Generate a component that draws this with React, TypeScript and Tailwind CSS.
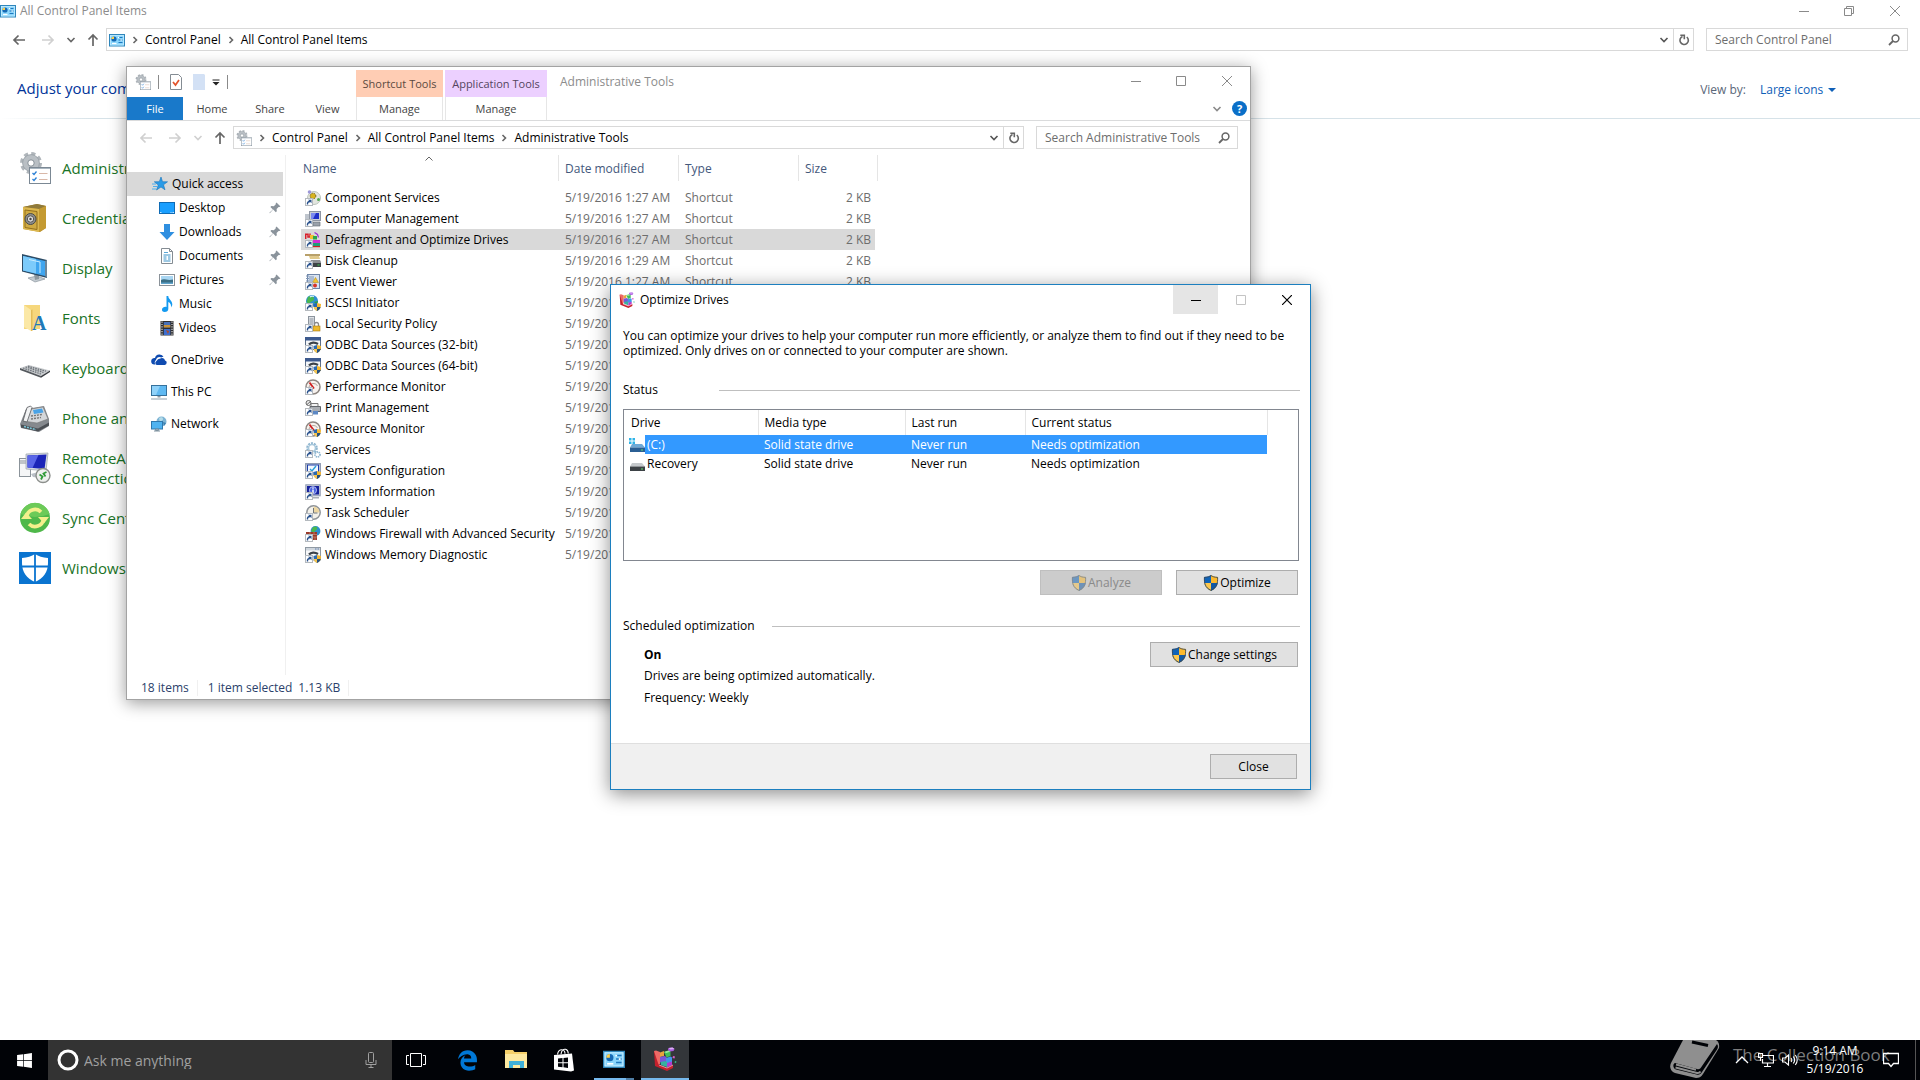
import type { ReactNode } from 'react'
import { FaEdgeLegacy, FaWindows } from 'react-icons/fa'

interface IconProps {
  size?: number
  className?: string
  box?: number
  children?: ReactNode
}

function Svg({ size = 16, className = '', box = 16, children }: IconProps) {
  return (
    <svg
      width={size}
      height={size}
      viewBox={`0 0 ${box} ${box}`}
      fill="none"
      className={`shrink-0 ${className}`}
      aria-hidden="true"
    >
      {children}
    </svg>
  )
}

/* ---------- small glyphs ---------- */

function ArrowGlyph({ dir, className = '' }: { dir: 'left' | 'right' | 'up'; className?: string }) {
  const paths = {
    left: 'M14 8H3M7.5 3.5L3 8l4.500 4.500',
    right: 'M2 8h11M8.500 3.500L13 8l-4.500 4.500',
    up: 'M8 14V3M3.500 7.500L8 3l4.500 4.500',
  }
  return (
    <Svg className={className}>
      <path d={paths[dir]} stroke="currentColor" strokeWidth="1.7" />
    </Svg>
  )
}

function Chevron({ dir, className = '' }: { dir: 'down' | 'right'; className?: string }) {
  return (
    <Svg size={10} box={10} className={className}>
      <path d={dir === 'down' ? 'M1.500 3L5 6.500 8.500 3' : 'M3.500 2L6.500 5 3.500 8'} stroke="currentColor" strokeWidth="1.6" />
    </Svg>
  )
}

function RefreshGlyph() {
  return (
    <Svg className="text-[#666]">
      <path d="M10.800 5a4.200 4.200 0 1 1-4.300-.600" stroke="currentColor" strokeWidth="1.600" />
      <path d="M4.300 3.300h4v4" stroke="currentColor" strokeWidth="1.600" />
    </Svg>
  )
}

function SearchGlyph() {
  return (
    <Svg className="text-[#666]">
      <circle cx="9.500" cy="6.500" r="3.400" stroke="currentColor" strokeWidth="1.500" />
      <path d="M7 9l-4 4" stroke="currentColor" strokeWidth="1.800" />
    </Svg>
  )
}

function PinGlyph() {
  return (
    <Svg size={12} box={12} className="text-[#8a939b]">
      <path d="M7.500.500l4 4-1.200.600-.700-.200-2 2 .200 2.300-1 1-2.600-2.600L.800 11.200l-.400-.400 3.500-3.400L1.400 5l1-1 2.400.200 2-2-.100-.700z" fill="currentColor" />
    </Svg>
  )
}

function Shield({ dim = false }: { dim?: boolean }) {
  return (
    <Svg className={dim ? 'opacity-50' : ''}>
      <path d="M8 0C6.500 1.200 4.000 1.900 1 2c-.200 6 .500 11 7 14z" fill="#0f63b8" />
      <path d="M8 0c1.500 1.200 4.000 1.900 7 2 .200 6-.500 11-7 14z" fill="#fdb92c" />
      <path d="M1.200 8H8v8C4 14 1.800 11.500 1.200 8z" fill="#fdc84e" />
      <path d="M14.800 8H8v8c4-2 6.200-4.500 6.800-8z" fill="#1259a5" />
      <path d="M8 .500C6.500 1.700 4.200 2.300 1.400 2.400c-.200 6 .600 10 6.600 13 6-3 6.800-7 6.600-13C11.800 2.300 9.500 1.700 8 .500z" stroke="#3a4a5a" strokeWidth=".900" />
    </Svg>
  )
}

/* ---------- object icons ---------- */

function ControlPanelIcon({ size = 16 }: { size?: number }) {
  return (
    <Svg size={size}>
      <rect x=".500" y="2.500" width="15" height="11.500" fill="#8ad6fc" stroke="#2f86bb" />
      <rect x="1.500" y="3.500" width="13" height="9.500" stroke="#c9edff" strokeWidth=".700" />
      <circle cx="5" cy="7" r="2.600" fill="#1769b4" />
      <path d="M5 7V4.400A2.600 2.600 0 0 0 2.400 7z" fill="#fdd04e" />
      <path d="M9.500 5.500h4M9.500 8h4M9.500 10.500h4" stroke="#1f78bf" strokeWidth="1.100" />
      <path d="M3 11.500h4.500" stroke="#fff" strokeWidth="1.200" />
      <rect x="9" y="4.900" width="1.300" height="1.300" fill="#fff" />
      <rect x="11.500" y="7.400" width="1.300" height="1.300" fill="#fff" />
    </Svg>
  )
}

function AdminToolsIcon({ size = 16 }: { size?: number }) {
  return (
    <Svg size={size} box={32}>
      <circle cx="12" cy="11" r="9.300" stroke="#b0b6bb" strokeWidth="3.400" strokeDasharray="4.100 3.200" />
      <circle cx="12" cy="11" r="5.800" stroke="#b9bfc4" strokeWidth="5.500" />
      <circle cx="12" cy="11" r="8.400" stroke="#8f989f" strokeWidth=".700" />
      <circle cx="12" cy="11" r="3.200" stroke="#8b949b" strokeWidth="1" />
      <rect x="10.500" y="15.500" width="21" height="16" fill="#fff" stroke="#7b8894" />
      <path d="M11 16.500h20" stroke="#a9b5bf" />
      <path d="M13.500 21l1.500 1.500 2.500-3M13.500 27l1.500 1.500 2.500-3" stroke="#2a7fd4" strokeWidth="1.300" />
      <path d="M20 21.500h8.500M20 27.500h8.500" stroke="#d9b8a8" />
    </Svg>
  )
}

function CredentialIcon() {
  return (
    <Svg size={32} box={32}>
      <path d="M4 5l14-3 9 2v22l-6 4-17-3z" fill="#b88d26" />
      <path d="M4 5l14-3 9 2-7 3z" fill="#8f7a3c" />
      <path d="M4 5l16 2v23L4 27z" fill="#dcb850" />
      <path d="M20 7l7-3v22l-7 4z" fill="#c49a32" />
      <path d="M6 8l12 1.500V27.500L6 25.500z" stroke="#94701c" fill="#cfaa42" />
      <circle cx="11.500" cy="17" r="5.500" fill="#8e8e8c" stroke="#4b4b46" />
      <circle cx="11.500" cy="17" r="3.200" fill="#ddd" stroke="#555" />
      <circle cx="11.500" cy="17" r="1.200" fill="#444" />
    </Svg>
  )
}

function DisplayIcon() {
  return (
    <Svg size={32} box={32}>
      <path d="M9 26l9-2 8 3-10 3z" fill="#c3cbd1" stroke="#8c979f" strokeWidth=".700" />
      <path d="M15 22l5 1v4l-4 1z" fill="#8d989f" />
      <path d="M3 2l25 6v18L3 19.500z" fill="#2d4c66" />
      <path d="M4 4l22 5v15L4 18.500z" fill="#3fa5ef" />
      <path d="M4 4l13 3v14.500L4 18.500z" fill="#7ccbfb" />
      <path d="M10 7.500l11 2.500v11" stroke="#c9ecff" />
      <path d="M26 9l2-1v18l-2-2z" fill="#6d8699" />
    </Svg>
  )
}

function FontsIcon() {
  return (
    <Svg size={32} box={32}>
      <path d="M5 3h16v24H5z" fill="#f6d77c" />
      <path d="M5 3l7 5v21l-7-4z" fill="#fbe8a6" />
      <path d="M12 8l1.500-.500V29L12 29z" fill="#e4bd58" />
      <text x="13" y="28" fontSize="20" fontWeight="700" fill="#1f7ab8" fontFamily="Liberation Serif, serif">A</text>
    </Svg>
  )
}

function KeyboardIcon() {
  return (
    <Svg size={32} box={32}>
      <path d="M1 16l9-3 21 5.500-9 5.500z" fill="#c9cccf" />
      <path d="M1 16l21 8v1.800L1 18z" fill="#55595e" />
      <path d="M22 24l9-5.500v1.500l-9 5.800z" fill="#383b40" />
      <path d="M4 16l18 6M6.500 15l18 5.500M9 14.200l18 5" stroke="#6f757b" strokeWidth="1.300" strokeDasharray="1.600 .900" />
    </Svg>
  )
}

function PhoneIcon() {
  return (
    <Svg size={32} box={32}>
      <path d="M1 22l6-15 18-3 5 13v7l-10 6L2 26z" fill="#85898e" />
      <path d="M7 8l17-3 5 12-11 4L4 19z" fill="#d4d7da" stroke="#777" strokeWidth=".600" />
      <path d="M14 8l9-1.500 1.500 4-9.500 1.500z" fill="#4aa3e6" />
      <path d="M4 19L8 5.500 11.500 4l1.500 1.500L8 20z" fill="#f2f3f4" stroke="#55585c" strokeWidth=".800" />
      <path d="M12 14l11-1.500M12 17l10-1.500" stroke="#777" strokeWidth="1.400" strokeDasharray="2 1" />
      <path d="M2 22.500l17 4 11-6v3l-11 6-17-4z" fill="#4b4f54" />
      <path d="M5 24.500l12 3" stroke="#7cc6d8" strokeWidth="1.500" strokeDasharray="2 1" />
    </Svg>
  )
}

function RemoteIcon() {
  return (
    <Svg size={32} box={32}>
      <rect x=".500" y="6.500" width="11" height="18" fill="#f5f6f7" stroke="#8b939a" />
      <path d="M1 9h10M1 11h10" stroke="#8b939a" />
      <path d="M7 2l22-1-2 18-20-2z" fill="#d6dae0" stroke="#9aa2ac" strokeWidth=".700" />
      <path d="M8.500 3.500l19-1-2 14.500-17-1.500z" fill="#1b24b8" />
      <path d="M8.500 3.500l11-.500-6 13-5-.500z" fill="#5a66e8" />
      <path d="M12 22l7-2 3 6-8-1z" fill="#b9bfc6" />
      <circle cx="24" cy="23.500" r="7" fill="#eef0ee" stroke="#8c8f8c" strokeWidth="1.400" />
      <path d="M20.500 22.500l3 2-1.500 3M27.500 20l-3 1.500 2 3" stroke="#2f9a37" strokeWidth="1.800" />
    </Svg>
  )
}

function SyncIcon() {
  return (
    <Svg size={32} box={32}>
      <circle cx="16" cy="16" r="15" fill="#4fb84a" />
      <path d="M1.500 12A15 15 0 0 1 30.500 12Q16 18 1.500 12z" fill="#6cca58" />
      <path d="M7.500 15a8.500 8.500 0 0 1 14.500-5M24.500 17a8.500 8.500 0 0 1-14.500 5" stroke="#f4f08c" strokeWidth="3.600" />
      <path d="M19 15h11l-5 6.500zM13 17H2l5-6.500z" fill="#f4f08c" />
    </Svg>
  )
}

function DefenderIcon() {
  return (
    <Svg size={32} box={32}>
      <path d="M0 0h32v32H0z" fill="#0a74d0" />
      <path d="M16 2c-3.500 2.500-7.500 3.500-13 4v5c0 9 4.500 15.500 13 19 8.500-3.500 13-10 13-19V6c-5.500-.500-9.500-1.500-13-4z" fill="#fff" />
      <path d="M16 2v28M2 14.500h28" stroke="#0a74d0" strokeWidth="1.800" />
    </Svg>
  )
}

function DefragIcon({ size = 16 }: { size?: number }) {
  return (
    <Svg size={size} box={24}>
      <path d="M1 4l5 1.500V18l8 3 6-3v3l-6 3-12-5z" fill="#c4202c" />
      <path d="M1 4l2-.500 4 1.500v12l-1.500.500z" fill="#ee6a66" />
      <path d="M7 5.500l4-1.500v5l-4 1z" fill="#e8a33c" />
      <path d="M11 5l4.500-1.500 2 1V9l-4 1.500z" fill="#3fbf58" />
      <path d="M11 5l4.500-1.500 2 1-4 1.500z" fill="#9be8a0" />
      <path d="M7 10l4.500-1 2 1v4.500L9 16l-2-1z" fill="#7a56d8" />
      <path d="M13 11l4.500-1.500 1.500 1V15l-4 1.500-2-1z" fill="#3f94ea" />
      <path d="M7.500 15l4.500-1 2 1v5l-6-2z" fill="#37b0a0" />
      <path d="M14 16l5-1.500V18l-5 2.500z" fill="#b23ad0" />
      <path d="M6 18l8 3 6-3" stroke="#f3a3b0" strokeWidth=".900" />
      <path d="M15.500 1l4-.500 2 1.500-1 2-4 .500-1.500-1.500z" fill="#a95be0" />
      <path d="M15.500 1l4-.500 2 1.500-4 .500z" fill="#dcaef5" />
      <path d="M20 9l2 .500-.500 2-2-.500z" fill="#d860c8" />
      <path d="M22 14l1.500.500-.500 1.500-1.500-.500z" fill="#35c08c" />
    </Svg>
  )
}

/* ---------- shortcut icons of the file list ---------- */

type ToolKind =
  | 'component' | 'computer' | 'defrag' | 'cleanup' | 'event' | 'iscsi' | 'policy' | 'odbc' | 'gauge'
  | 'print' | 'services' | 'config' | 'info' | 'clock' | 'firewall' | 'memory'

const toolArt: Record<ToolKind, ReactNode> = {
  component: (
    <>
      <circle cx="9" cy="8" r="6.500" fill="#e3e6df" stroke="#bcc4bd" />
      <circle cx="8" cy="6" r="2.800" fill="#d8b41e" stroke="#6a5a16" strokeDasharray="1.200 .800" />
      <circle cx="4.500" cy="2" r="1.800" fill="#9c97d8" />
      <circle cx="13.500" cy="9.500" r="1.500" fill="#52a852" />
    </>
  ),
  computer: (
    <>
      <rect x="4.500" y=".500" width="11" height="9" fill="#c9ced6" stroke="#8e96a3" />
      <rect x="6" y="2" width="8" height="6" fill="#1f2fc8" />
      <path d="M6 2h5l-3 6H6z" fill="#7b8af0" />
      <path d="M8 11h7v4H8z" fill="#9aa1aa" stroke="#6c727b" strokeWidth=".700" />
      <path d="M0 3h4v5H0z" fill="#bfc5cd" />
    </>
  ),
  defrag: (
    <>
      <path d="M.700 7V2.200H3V5h2V1.500" stroke="#d81f2a" strokeWidth="1.500" />
      <path d="M5 3h4v4H5z" fill="#f1c232" />
      <path d="M8 4h4v3.500H8z" fill="#2aa84a" />
      <path d="M8 8h7v3H8z" fill="#d12fd4" />
      <path d="M7 11h8v3H7z" fill="#1f9e78" />
      <path d="M9.500.500l3 2 1 3" stroke="#9b30d0" strokeWidth="1.200" />
      <path d="M6 14h9v1.200H6z" fill="#c22" />
    </>
  ),
  cleanup: (
    <>
      <path d="M0 1h15v2H0z" fill="#b8a06a" />
      <path d="M4 3h10l1 3H5z" fill="#e0c98c" />
      <path d="M5 9l1-2h9l1 2v5H5z" fill="#8c9094" />
      <path d="M5 10h11v4H5z" fill="#3e4347" />
      <path d="M12.500 12h2" stroke="#39d353" />
    </>
  ),
  event: (
    <>
      <rect x="2.500" y=".500" width="12" height="14" fill="#d9e4f2" stroke="#6f86a8" />
      <path d="M4 3h5M4 5h5M4 7h4M1 2h3M1 4.500h3M1 7h3" stroke="#7f95b5" />
      <path d="M10.500 3.500l3 5h-6z" fill="#f4c430" stroke="#a88414" strokeWidth=".500" />
      <circle cx="10" cy="11.500" r="2" fill="#d8352a" />
    </>
  ),
  iscsi: (
    <>
      <circle cx="7" cy="6" r="6" fill="#2d8fd0" />
      <path d="M3 2c3-2 6-1 6 2S5 6 4 9L1.500 7z" fill="#49b84f" />
      <path d="M9 7l4-1-1 4z" fill="#2d9b45" />
      <path d="M5 2a4 4 0 0 1 4-.500" stroke="#d6f0ff" strokeWidth="1.200" />
    </>
  ),
  policy: (
    <>
      <rect x="3.500" y=".500" width="6" height="10" fill="#dfe3e8" stroke="#8c949d" />
      <path d="M4.500 3h4M4.500 5h4M4.500 7h4" stroke="#8c949d" />
      <path d="M9.500 10V8.500a2 2 0 0 1 4 0V10" stroke="#8a8a8a" strokeWidth="1.300" />
      <rect x="8" y="10" width="7" height="5" fill="#edb82c" stroke="#a87a10" strokeWidth=".600" />
    </>
  ),
  odbc: (
    <>
      <rect x=".500" y=".500" width="15" height="12" fill="#f4f6f8" stroke="#5d6f88" />
      <path d="M0 0h16v3.500H0z" fill="#3d5a8e" />
      <path d="M4 7.500c2-2.500 6-2.500 9-.500" stroke="#3b4148" strokeWidth="2.200" />
    </>
  ),
  gauge: (
    <>
      <circle cx="8" cy="8" r="7" fill="#f7f2ee" stroke="#8d8580" strokeWidth="1.500" />
      <path d="M4 8a4.500 4.500 0 0 1 8.500-1" stroke="#b5a89e" />
      <path d="M4.500 3.500l4.500 6" stroke="#d01e1e" strokeWidth="1.800" />
    </>
  ),
  print: (
    <>
      <circle cx="3.500" cy="3" r="2.500" fill="#eee" stroke="#666" />
      <path d="M2 4.500L6 1" stroke="#666" />
      <path d="M6 3.500h7V7H6z" fill="#f3f3f3" stroke="#777" />
      <path d="M5 6.500h10.500v5H5z" fill="#a9adb2" stroke="#62666b" />
      <path d="M8 11h5v3.500H8z" fill="#5c88c4" />
    </>
  ),
  services: (
    <>
      <circle cx="7" cy="6" r="4.800" stroke="#8fb5cf" strokeWidth="2" strokeDasharray="2 1" />
      <circle cx="7" cy="6" r="3.500" stroke="#a8c8dc" strokeWidth="1.600" />
      <circle cx="12.500" cy="12.500" r="2.500" stroke="#8fb5cf" strokeWidth="1.800" strokeDasharray="1.400 .700" />
    </>
  ),
  config: (
    <>
      <rect x=".800" y=".800" width="14.400" height="11" fill="#fff" stroke="#8d98b0" strokeWidth="1.500" />
      <rect x="2.500" y="2" width="11" height="8" fill="#f4f8ff" stroke="#1d3faa" />
      <path d="M5 6l2 2 4-5" stroke="#29a0d8" strokeWidth="1.400" />
    </>
  ),
  info: (
    <>
      <rect x=".800" y=".800" width="14.400" height="11" fill="#c6ccd8" stroke="#8d98b0" />
      <rect x="2" y="2" width="12" height="8.500" fill="#15209c" />
      <circle cx="8" cy="6.200" r="3.600" fill="#4a63e0" stroke="#dbe2ff" strokeWidth=".700" />
      <path d="M8 5.500V9M8 3.500v1.200" stroke="#fff" strokeWidth="1.400" />
      <path d="M8 13h6v1.500H7z" fill="#a9afb8" />
    </>
  ),
  clock: (
    <>
      <circle cx="8.500" cy="7.500" r="6.700" fill="#f3f1ea" stroke="#8f9499" strokeWidth="1.500" />
      <path d="M8.500 7.500V1.500a6 6 0 0 1 6 6z" fill="#ecd6a2" />
      <path d="M8.500 3v5h4" stroke="#6e7478" />
    </>
  ),
  firewall: (
    <>
      <circle cx="10.500" cy="5" r="4.900" fill="#2d8fd0" />
      <path d="M8 1c3-1.500 5 0 4 2s-3 2-3 4L6 5z" fill="#49b84f" />
      <path d="M1 6h11v8H1z" fill="#9a3a2a" />
      <path d="M1 8.500h11M1 11h11M5 6v2.500M9 6v2.500M7 8.500V11M10 11v3" stroke="#d09a88" strokeWidth=".600" />
    </>
  ),
  memory: (
    <>
      <rect x=".500" y=".500" width="15" height="12.500" fill="#f7f8f9" stroke="#8f99a3" />
      <path d="M1 1h14v2.500H1z" fill="#cfd6dd" />
      <path d="M10 2h4" stroke="#5f7fae" strokeDasharray="1 .500" />
      <path d="M4 7.500c2-2.500 6-2.500 9-.500" stroke="#3b4148" strokeWidth="2.200" />
    </>
  ),
}

function ToolIcon({ kind, shield }: { kind: ToolKind; shield?: boolean }) {
  return (
    <Svg>
      {toolArt[kind]}
      {shield && (
        <>
          <path d="M12 8l4 1c0 3.500-1 5.500-4 7z" fill="#f5b72e" />
          <path d="M12 8L8.500 9c0 3.500.700 5.500 3.500 7z" fill="#2a68b0" />
          <path d="M8.600 12H12v4c-2-1-3.200-2-3.400-4z" fill="#f5c552" />
          <path d="M15.600 12H12v4c2-1 3.200-2 3.600-4z" fill="#24507f" />
        </>
      )}
      <rect x=".500" y="8.500" width="7" height="7" fill="#fff" stroke="#b4b9be" />
      <path d="M2.500 14.500c-.300-2 .500-3 2.500-3" stroke="#27508c" strokeWidth="1.400" />
      <path d="M3 9.700h3.500v3.500z" fill="#27508c" />
    </Svg>
  )
}

/* ---------- navigation pane icons ---------- */

function StarIcon() {
  return (
    <Svg>
      <path d="M9 1l1.500 4.700 5 .100-4 3 1.500 5L9 11l-4.500 3 1.800-5-4-3.200 5-.100z" fill="#2b9be6" stroke="#1474bd" strokeWidth=".600" />
      <path d="M0 8h4M1 10.500h4M0 13h4" stroke="#4fb0ee" />
    </Svg>
  )
}

function DesktopIcon() {
  return (
    <Svg>
      <rect x=".500" y="2.500" width="15" height="11" fill="#1a9fff" stroke="#0f6bb5" />
      <path d="M1 12.500h14" stroke="#bfe3ff" strokeDasharray="1.500 9 1 1" />
    </Svg>
  )
}

function DownloadIcon() {
  return (
    <Svg>
      <path d="M5 0h6v8h4.500L8 16 .500 8H5z" fill="#2f8fe0" />
    </Svg>
  )
}

function DocumentIcon() {
  return (
    <Svg>
      <path d="M2.500.500h8l3 3v12h-11z" fill="#fff" stroke="#848c93" />
      <path d="M10.500.500v3h3" stroke="#848c93" />
      <path d="M4.500 7h7M4.500 9h3M4.500 11h3M4.500 13h7M9 9h2.500M9 11h2.500" stroke="#3d93c8" />
      <path d="M5 4.500h4" stroke="#5aa7d6" />
    </Svg>
  )
}

function PicturesIcon() {
  return (
    <Svg>
      <rect x=".500" y="2.500" width="15" height="11" fill="#fff" stroke="#8b9299" />
      <path d="M2 4h12v8H2z" fill="#a9d6f2" />
      <path d="M2 8c3-2 6 1 12-.500V12H2z" fill="#3b6f86" />
      <path d="M2 10.500h12V12H2z" fill="#5fa3cb" />
    </Svg>
  )
}

function MusicIcon() {
  return (
    <Svg>
      <path d="M7.500 0h1.800c0 3.500 4.200 4 4 9l-1.300 2.500C12.500 8 10.500 6.500 9.300 6v7c0 1.800-1.600 3-3.600 3S2.800 14.800 3 13.500C3.200 11.500 5.500 10.500 7.500 11z" fill="#149af0" />
    </Svg>
  )
}

function VideosIcon() {
  return (
    <Svg>
      <path d="M1.500 1h13v14.500h-13z" fill="#2e2e30" />
      <path d="M3 1.500V15M13 1.500V15" stroke="#d8d8d8" strokeWidth="1.200" strokeDasharray="1.200 1.200" />
      <path d="M4.800 2h6.500v5.500H4.800z" fill="#4770b8" />
      <path d="M4.800 5h6.500v2.500H4.800z" fill="#c99136" />
      <path d="M4.800 9h6.500v6H4.800z" fill="#3d6fd0" />
      <path d="M7 10l3 1-1 3z" fill="#b24a26" />
    </Svg>
  )
}

function OneDriveIcon() {
  return (
    <Svg>
      <path d="M6.500 13h7.200a2.300 2.300 0 0 0 .300-4.500 3.200 3.200 0 0 0-4.700-2A4.300 4.300 0 0 0 5.500 9 2.100 2.100 0 0 0 6.500 13z" fill="#0f4bb0" />
      <path d="M4.500 12.500A3 3 0 0 1 5 8c.500-2.500 3-4 5.500-2.500.500-.300 1.500-.500 2.200-.300A4.600 4.600 0 0 0 4 6 3.300 3.300 0 0 0 .200 9.500c0 1.800 1.300 3 3 3z" fill="#0f4bb0" />
    </Svg>
  )
}

function PcIcon() {
  return (
    <Svg>
      <rect x=".500" y="1.500" width="15" height="10" fill="#5fb9f2" stroke="#35719c" />
      <path d="M1 2h8l-4 9H1z" fill="#8fd2fa" />
      <path d="M6.500 12h3v1.500h-3z" fill="#8d99a3" />
      <path d="M0 15h16" stroke="#8fa0ad" />
    </Svg>
  )
}

function NetworkIcon() {
  return (
    <Svg>
      <circle cx="10.500" cy="5.500" r="5" fill="#7db4d4" />
      <path d="M8 2c2-1.500 4-1 4 1s-3 2-3 4z" fill="#b4dbe8" />
      <path d="M12 6l3 1-2 3z" fill="#3c7fae" />
      <rect x=".500" y="5.500" width="11" height="7.500" fill="#4fb3f0" stroke="#2f78ad" />
      <path d="M4.500 13h3v1.500h-3zM3 15h6" stroke="#7f929f" />
    </Svg>
  )
}

/* ---------- shared controls ---------- */

function WindowButtons({ restore = false, tone }: { restore?: boolean; tone: string }) {
  return (
    <div className={`flex ${tone}`}>
      <button aria-label="Minimize" className="flex h-7 w-[45px] items-center justify-center">
        <Svg size={10} box={10}><path d="M0 5.500h10" stroke="currentColor" /></Svg>
      </button>
      <button aria-label="Maximize" className="flex h-7 w-[45px] items-center justify-center">
        <Svg size={10} box={10}>
          {restore ? (
            <path d="M.500 2.500h7v7h-7zM2.500 2.500v-2h7v7h-2" stroke="currentColor" />
          ) : (
            <path d="M.500.500h9v9h-9z" stroke="currentColor" />
          )}
        </Svg>
      </button>
      <button aria-label="Close" className="flex h-7 w-[47px] items-center justify-center">
        <Svg size={10} box={10}><path d="M0 0l10 10M10 0L0 10" stroke="currentColor" /></Svg>
      </button>
    </div>
  )
}

function AddressBar({ icon, crumbs }: { icon: ReactNode; crumbs: string[] }) {
  return (
    <div className="flex h-[23px] min-w-0 flex-1 items-center border border-[#d9d9d9] pl-[2px]">
      {icon}
      <nav aria-label="Path" className="flex flex-1 items-center">
        {crumbs.map((crumb) => (
          <span key={crumb} className="flex items-center">
            <Chevron dir="right" className="mx-[5px] text-[#666]" />
            <a href="#" className="text-black">{crumb}</a>
          </span>
        ))}
      </nav>
      <button aria-label="Previous locations" className="flex h-full w-[18px] items-center justify-center text-[#555]">
        <Chevron dir="down" />
      </button>
      <button aria-label="Refresh" className="flex h-full w-5 items-center justify-center border-l border-[#d9d9d9]">
        <RefreshGlyph />
      </button>
    </div>
  )
}

function SearchBox({ label }: { label: string }) {
  return (
    <div className="flex h-[23px] w-[202px] items-center border border-[#d9d9d9] pr-[5px] pl-2">
      <input type="search" aria-label={label} placeholder={label} className="min-w-0 flex-1 bg-transparent outline-none placeholder:text-[#6d6d6d]" />
      <SearchGlyph />
    </div>
  )
}

/* ---------- control panel ---------- */

const panelItems = [
  { label: 'Administrative Tools', icon: <AdminToolsIcon size={32} /> },
  { label: 'Credential Manager', icon: <CredentialIcon /> },
  { label: 'Display', icon: <DisplayIcon /> },
  { label: 'Fonts', icon: <FontsIcon /> },
  { label: 'Keyboard', icon: <KeyboardIcon /> },
  { label: 'Phone and Modem', icon: <PhoneIcon /> },
  { label: 'RemoteApp and Desktop Connections', icon: <RemoteIcon /> },
  { label: 'Sync Center', icon: <SyncIcon /> },
  { label: 'Windows Defender', icon: <DefenderIcon /> },
]

function ControlPanel() {
  return (
    <main className="flex-1 bg-white">
      <header className="flex h-[22px] items-center justify-between pr-[2px]">
        <div className="flex items-center gap-1 text-[#8c8c8c]">
          <ControlPanelIcon />
          <h1>All Control Panel Items</h1>
        </div>
        <WindowButtons restore tone="text-[#8a8a8a]" />
      </header>

      <div className="mt-[6px] flex items-center pr-3 pl-[11px]">
        <div className="flex w-[95px] items-center justify-between pr-[5px] text-[#666]">
          <button aria-label="Back"><ArrowGlyph dir="left" /></button>
          <button aria-label="Forward" className="ml-2 text-[#d0d0d0]"><ArrowGlyph dir="right" /></button>
          <button aria-label="Recent" className="mx-1"><Chevron dir="down" /></button>
          <button aria-label="Up"><ArrowGlyph dir="up" /></button>
        </div>
        <AddressBar icon={<ControlPanelIcon />} crumbs={['Control Panel', 'All Control Panel Items']} />
        <div className="w-3" />
        <SearchBox label="Search Control Panel" />
      </div>

      <div className="mt-6 flex h-[43px] items-start justify-between pr-[84px] pl-[17px]">
        <h2 className="text-[15px] leading-[26px] text-[#003399]">Adjust your computer’s settings</h2>
        <div className="flex h-[30px] items-center">
          <label htmlFor="view-by" className="mr-[14px] text-[#5a6779]">View by:</label>
          <select id="view-by" className="appearance-none bg-transparent pr-1 text-[#0f60b8]">
            <option>Large icons</option>
          </select>
          <Svg size={8} box={8} className="text-[#0f60b8]"><path d="M0 2h8L4 6z" fill="currentColor" /></Svg>
        </div>
      </div>
      <div className="h-px bg-linear-to-r from-white via-[#d6e2e8] via-5% to-[#d6e2e8]" />

      <ul className="mt-6 w-[310px] pl-[19px] text-[15px] leading-5 text-[#1a7326]">
        {panelItems.map((item) => (
          <li key={item.label} className="flex h-[50px] items-center gap-[11px]">
            {item.icon}
            <a href="#" className="w-[190px]">{item.label}</a>
          </li>
        ))}
      </ul>
    </main>
  )
}

/* ---------- explorer window ---------- */

const quickItems = [
  { label: 'Desktop', icon: <DesktopIcon />, pinned: true },
  { label: 'Downloads', icon: <DownloadIcon />, pinned: true },
  { label: 'Documents', icon: <DocumentIcon />, pinned: true },
  { label: 'Pictures', icon: <PicturesIcon />, pinned: true },
  { label: 'Music', icon: <MusicIcon />, pinned: false },
  { label: 'Videos', icon: <VideosIcon />, pinned: false },
]

const rootItems = [
  { label: 'OneDrive', icon: <OneDriveIcon /> },
  { label: 'This PC', icon: <PcIcon /> },
  { label: 'Network', icon: <NetworkIcon /> },
]

interface Tool {
  name: string
  kind: ToolKind
  shield?: boolean
  time?: string
}

const tools: Tool[] = [
  { name: 'Component Services', kind: 'component' },
  { name: 'Computer Management', kind: 'computer' },
  { name: 'Defragment and Optimize Drives', kind: 'defrag' },
  { name: 'Disk Cleanup', kind: 'cleanup', time: '1:29 AM' },
  { name: 'Event Viewer', kind: 'event' },
  { name: 'iSCSI Initiator', kind: 'iscsi', shield: true },
  { name: 'Local Security Policy', kind: 'policy' },
  { name: 'ODBC Data Sources (32-bit)', kind: 'odbc', shield: true },
  { name: 'ODBC Data Sources (64-bit)', kind: 'odbc', shield: true },
  { name: 'Performance Monitor', kind: 'gauge' },
  { name: 'Print Management', kind: 'print' },
  { name: 'Resource Monitor', kind: 'gauge', shield: true },
  { name: 'Services', kind: 'services' },
  { name: 'System Configuration', kind: 'config', shield: true },
  { name: 'System Information', kind: 'info' },
  { name: 'Task Scheduler', kind: 'clock' },
  { name: 'Windows Firewall with Advanced Security', kind: 'firewall' },
  { name: 'Windows Memory Diagnostic', kind: 'memory', shield: true },
]

function Ribbon() {
  return (
    <>
      <header className="flex h-[30px] items-end justify-between">
        <div className="flex h-full items-end">
          <div className="flex h-full w-[229px] items-center pl-2">
            <AdminToolsIcon />
            <div className="mx-[7px] h-[14px] w-px bg-[#8a8a8a]" />
            <button aria-label="Properties" className="ml-[2px]">
              <Svg>
                <path d="M2.500.500h8l3 3v12h-11z" fill="#fff" stroke="#848c93" />
                <path d="M5 8l2.500 3L11 6" stroke="#e2542c" strokeWidth="1.700" />
              </Svg>
            </button>
            <button aria-label="New folder" className="ml-[7px]">
              <Svg><path d="M2 0h11l1 1v15H2z" fill="#d3e1f5" /></Svg>
            </button>
            <button aria-label="Customize toolbar" className="ml-1">
              <Svg size={10} box={10}><path d="M1.500 3h7" stroke="#222" /><path d="M1.500 5h7L5 8.500z" fill="#222" /></Svg>
            </button>
            <div className="ml-[6px] h-[14px] w-px bg-[#8a8a8a]" />
          </div>
          <div className="mr-0.5 flex h-[27px] w-[87px] items-center justify-center bg-[#ffcdb4] text-[11px] text-[#5c4a40]">Shortcut Tools</div>
          <div className="flex h-[27px] w-[102px] items-center justify-center bg-[#ecd0ff] text-[11px] text-[#54455e]">Application Tools</div>
          <h2 className="flex h-full items-center pl-[13px] text-[#8c8c8c]">Administrative Tools</h2>
        </div>
        <div className="h-full"><WindowButtons tone="text-[#8a8a8a]" /></div>
      </header>
      <div className="flex h-6 items-stretch border-b border-[#dadbdc] text-[11px] text-[#444]">
        <button className="w-14 bg-[#1979ca] text-white">File</button>
        <button className="w-[58px]">Home</button>
        <button className="w-[58px]">Share</button>
        <button className="w-[57px]">View</button>
        <div className="mr-0.5 flex w-[87px] border-x border-[#e6e6e6]"><button className="flex-1">Manage</button></div>
        <div className="flex w-[102px] border-x border-[#e6e6e6]"><button className="flex-1">Manage</button></div>
        <div className="flex flex-1 items-center justify-end gap-[10px] pr-[3px]">
          <button aria-label="Expand the ribbon" className="text-[#8a8a8a]"><Chevron dir="down" /></button>
          <button aria-label="Help" className="h-[15px] w-[15px] rounded-full bg-[#0a6fc8] text-[11px] leading-[15px] font-bold text-white">?</button>
        </div>
      </div>
    </>
  )
}

function NavPane() {
  return (
    <aside className="w-[159px] border-r border-[#f0f0f0] pt-[17px]">
      <ul>
        <li className="mr-[2px] bg-[#d9d9d9]">
          <a href="#" className="flex h-6 items-center gap-1 pl-[25px]"><StarIcon />Quick access</a>
        </li>
        {quickItems.map((item) => (
          <li key={item.label} className="flex h-6 items-center justify-between pr-1 pl-8">
            <a href="#" className="flex items-center gap-1">{item.icon}{item.label}</a>
            {item.pinned && <PinGlyph />}
          </li>
        ))}
        {rootItems.map((item) => (
          <li key={item.label} className="mt-2">
            <a href="#" className="flex h-6 items-center gap-1 pl-6">{item.icon}{item.label}</a>
          </li>
        ))}
      </ul>
    </aside>
  )
}

function FileTable() {
  const headCell = 'h-[26px] border-r border-[#e5e5e5] pl-[6px] leading-[28px]'
  return (
    <table className="w-[577px] table-fixed border-collapse">
      <colgroup>
        <col className="w-[258px]" />
        <col className="w-[120px]" />
        <col className="w-[120px]" />
        <col className="w-[76px]" />
        <col className="w-[3px]" />
      </colgroup>
      <thead>
        <tr className="h-8 text-left align-top text-[#44587c]">
          <th className="p-0 font-normal">
            <div className="relative h-[26px] border-r border-[#e5e5e5] pl-[2px] leading-[28px]">
              Name
              <Svg size={8} box={8} className="absolute top-0 left-[124px] text-[#666]"><path d="M.500 5.500L4 2l3.500 3.500" stroke="currentColor" /></Svg>
            </div>
          </th>
          <th className="p-0 font-normal"><div className={headCell}>Date modified</div></th>
          <th className="p-0 font-normal"><div className={headCell}>Type</div></th>
          <th className="p-0 font-normal"><div className="h-[26px] pl-[6px] leading-[28px]">Size</div></th>
          <th className="p-0" aria-hidden="true"><div className="h-[26px] border-r border-[#e5e5e5]" /></th>
        </tr>
      </thead>
      <tbody className="text-[#6d6d6d]">
        {tools.map((tool) => {
          const cell = tool.kind === 'defrag' ? 'bg-[#d9d9d9] p-0' : 'p-0'
          return (
            <tr key={tool.name} className="h-[21px]">
              <td className={cell}>
                <div className="flex h-[21px] items-center gap-1 pl-1 whitespace-nowrap text-black">
                  <ToolIcon kind={tool.kind} shield={tool.shield} />
                  {tool.name}
                </div>
              </td>
              <td className={cell}><div className="pl-[6px] whitespace-nowrap">5/19/2016 {tool.time ?? '1:27 AM'}</div></td>
              <td className={cell}><div className="pl-[6px]">Shortcut</div></td>
              <td className={cell}><div className="pr-1 text-right">2 KB</div></td>
              <td className="p-0" />
            </tr>
          )
        })}
      </tbody>
    </table>
  )
}

function Explorer() {
  return (
    <section
      aria-label="Administrative Tools"
      className="absolute top-[66px] left-[126px] w-[1125px] border border-[#a3a3a3] bg-white shadow-[0_3px_16px_rgba(0,0,0,0.4)]"
    >
      <Ribbon />
      <div className="flex items-center pt-[5px] pr-3 pb-[6px] pl-[11px]">
        <div className="flex w-[95px] items-center justify-between pr-[5px] text-[#d0d0d0]">
          <button aria-label="Back"><ArrowGlyph dir="left" /></button>
          <button aria-label="Forward" className="ml-2"><ArrowGlyph dir="right" /></button>
          <button aria-label="Recent" className="mx-1"><Chevron dir="down" /></button>
          <button aria-label="Up" className="text-[#666]"><ArrowGlyph dir="up" /></button>
        </div>
        <AddressBar
          icon={<AdminToolsIcon />}
          crumbs={['Control Panel', 'All Control Panel Items', 'Administrative Tools']}
        />
        <div className="w-3" />
        <SearchBox label="Search Administrative Tools" />
      </div>
      <div className="flex h-[520px] items-stretch">
        <NavPane />
        <div className="pl-[15px]"><FileTable /></div>
      </div>
      <footer className="flex h-6 items-center pt-[2px] pl-[14px] text-[#2b3f6b]">
        <span className="border-r border-[#f0f0f0] pr-2">18 items</span>
        <span className="pr-[6px] pl-[10px]">1 item selected</span>
        <span className="border-r border-[#f0f0f0] pr-2">1.13 KB</span>
      </footer>
    </section>
  )
}

/* ---------- optimize drives dialog ---------- */

const drives = [
  { name: '(C:)', media: 'Solid state drive', lastRun: 'Never run', status: 'Needs optimization', system: true },
  { name: 'Recovery', media: 'Solid state drive', lastRun: 'Never run', status: 'Needs optimization', system: false },
]

function DriveIcon({ system }: { system: boolean }) {
  return (
    <Svg>
      {system && <path d="M0 1h2.500v2.500H0zM3.500 1H6v2.500H3.500zM0 4.500h2.500V7H0zM3.500 4.500H6V7H3.500z" fill="#2fb4e8" />}
      <path d="M3 7h10l3 3.500H1z" fill={system ? '#6fa9d6' : '#c5c9cc'} />
      <path d="M1 10.500h15V15H1z" fill={system ? '#2b5f94' : '#3d4246'} />
      <path d="M12 13h2" stroke="#5fe06a" />
    </Svg>
  )
}

function GroupTitle({ label, gap }: { label: string; gap: string }) {
  return (
    <div className="flex h-4 items-center">
      <h3 className={`${gap} leading-4`}>{label}</h3>
      <div className="h-px flex-1 bg-[#bfbfbf]" />
    </div>
  )
}

const pushButton = 'flex h-[25px] items-center justify-center gap-px border border-[#adadad] bg-[#e1e1e1]'

function OptimizeDialog() {
  return (
    <section
      role="dialog"
      aria-label="Optimize Drives"
      className="absolute top-[284px] left-[610px] w-[701px] border border-[#1c7fbf] bg-white shadow-[0_4px_18px_rgba(0,0,0,0.45)]"
    >
      <header className="flex h-[29px] items-start justify-between">
        <div className="flex h-[29px] items-center gap-[5px] pl-2">
          <DefragIcon />
          <h2>Optimize Drives</h2>
        </div>
        <div className="flex">
          <button aria-label="Minimize" className="flex h-[29px] w-[45px] items-center justify-center bg-[#e5e5e5]">
            <Svg size={10} box={10}><path d="M0 5.500h10" stroke="#000" /></Svg>
          </button>
          <button aria-label="Maximize" disabled className="flex h-[29px] w-[46px] items-center justify-center">
            <Svg size={10} box={10}><path d="M.500.500h9v9h-9z" stroke="#c4c4c4" /></Svg>
          </button>
          <button aria-label="Close" className="flex h-[29px] w-[46px] items-center justify-center">
            <Svg size={10} box={10}><path d="M0 0l10 10M10 0L0 10" stroke="#000" strokeWidth="1.200" /></Svg>
          </button>
        </div>
      </header>

      <div className="pr-[10px] pl-3">
        <p className="mt-[14px] leading-[15px]">
          You can optimize your drives to help your computer run more efficiently, or analyze them to find out if they need to be
          <br />
          optimized. Only drives on or connected to your computer are shown.
        </p>

        <div className="mt-6"><GroupTitle label="Status" gap="w-24" /></div>

        <div className="mt-[11px] mr-px h-[152px] border border-[#828790]">
          <table className="w-[643px] table-fixed border-collapse">
            <colgroup>
              <col className="w-[134px]" />
              <col className="w-[147px]" />
              <col className="w-[120px]" />
              <col className="w-[242px]" />
            </colgroup>
            <thead>
              <tr className="h-[25px] text-left">
                <th className="border-r border-[#e5e5e5] p-0 pl-[7px] font-normal">Drive</th>
                <th className="border-r border-[#e5e5e5] p-0 pl-[6px] font-normal">Media type</th>
                <th className="border-r border-[#e5e5e5] p-0 pl-[6px] font-normal">Last run</th>
                <th className="border-r border-[#e5e5e5] p-0 pl-[6px] font-normal">Current status</th>
              </tr>
            </thead>
            <tbody>
              {drives.map((drive) => {
                const tone = drive.system ? 'bg-[#3399ff] text-white' : ''
                return (
                  <tr key={drive.name} className="h-[19px]">
                    <td className="p-0">
                      <div className="flex h-[19px] items-center pl-[5px]">
                        <DriveIcon system={drive.system} />
                        <span className={`flex h-full flex-1 items-center pl-[2px] ${tone}`}>{drive.name}</span>
                      </div>
                    </td>
                    <td className={`p-0 pl-[6px] ${tone}`}>{drive.media}</td>
                    <td className={`p-0 pl-[6px] ${tone}`}>{drive.lastRun}</td>
                    <td className={`p-0 pl-[6px] ${tone}`}>{drive.status}</td>
                  </tr>
                )
              })}
            </tbody>
          </table>
        </div>

        <div className="mt-[9px] mr-[2px] flex justify-end gap-[14px]">
          <button disabled className="flex h-[25px] w-[122px] items-center justify-center gap-px border border-[#bfbfbf] bg-[#cccccc] text-[#8a8a8a]">
            <Shield dim />Analyze
          </button>
          <button className={`${pushButton} w-[122px]`}><Shield />Optimize</button>
        </div>

        <div className="mt-[23px]"><GroupTitle label="Scheduled optimization" gap="w-[149px]" /></div>

        <div className="mt-2 mr-[2px] flex h-[101px] items-start justify-between pl-[21px]">
          <div>
            <p className="h-[22px] leading-[26px] font-bold">On</p>
            <p className="h-[22px] leading-[24px]">Drives are being optimized automatically.</p>
            <p className="h-[22px] leading-[24px]">Frequency: Weekly</p>
          </div>
          <button className={`${pushButton} w-[148px]`}><Shield />Change settings</button>
        </div>
      </div>

      <footer className="flex h-[46px] items-center justify-end border-t border-[#dfdfdf] bg-[#f0f0f0] pr-[13px]">
        <button className={`${pushButton} w-[87px]`}>Close</button>
      </footer>
    </section>
  )
}

/* ---------- taskbar ---------- */

function Taskbar() {
  return (
    <footer className="flex h-10 items-stretch bg-[#010307] text-white">
      <button aria-label="Start" className="flex w-12 items-center justify-center"><FaWindows size={17} /></button>
      <div className="flex w-[344px] items-center gap-[5px] bg-[#333] pr-[13px] pl-[9px]">
        <Svg size={22} box={22}><circle cx="11" cy="11" r="9" stroke="#fff" strokeWidth="3" /></Svg>
        <input type="text" aria-label="Ask me anything" placeholder="Ask me anything" className="min-w-0 flex-1 bg-transparent pt-[2px] text-[14px] outline-none placeholder:text-[#a0a0a0]" />
        <Svg className="text-[#a0a0a0]">
          <rect x="5.500" y=".500" width="5" height="10" rx="1" stroke="currentColor" />
          <path d="M3 8v4.500h10V8M8 12.500V15M5.500 15.500h5" stroke="currentColor" />
        </Svg>
      </div>
      <button aria-label="Task View" className="flex w-12 items-center justify-center">
        <Svg size={20} box={20}>
          <path d="M4.500 3.500h11v13h-11zM3 5.500H.500v9H3M17 5.500h2.500v9H17" stroke="#fff" />
        </Svg>
      </button>
      <button aria-label="Microsoft Edge" className="flex w-[54px] items-center justify-center text-[#0078d7]"><FaEdgeLegacy size={21} /></button>
      <button aria-label="File Explorer" className="flex w-11 items-center justify-center">
        <Svg size={22} box={22}>
          <path d="M0 1h8l1.500 2H22v16H0z" fill="#f5d06a" />
          <path d="M0 5h22v14H0z" fill="#fde9a0" />
          <path d="M4 19v-7h15v7h-4v-3H8v3z" fill="#3fb0d8" />
        </Svg>
      </button>
      <button aria-label="Store" className="flex w-[52px] items-center justify-center">
        <Svg size={24} box={24}>
          <path d="M5.500 6.500C6 3 8 1.500 10 1.800s3 1.700 3 4M9 6.300C9.500 2.500 11.500.800 13.500 1.300s2.700 2 2.800 4.200" stroke="#fff" strokeWidth="1.100" />
          <path d="M2 7l18-1.500 2 17-3 1L2 21.500z" fill="#fff" />
          <path d="M6 10.500l4.500-.500v4.200H6zM11.500 9.900l4.500-.500v4.800h-4.500zM6 15.200h4.500v4L6 18.700zM11.500 15.200H16v4.700l-4.500-.600z" fill="#010307" />
        </Svg>
      </button>
      <button aria-label="Control Panel" className="relative mx-1 flex w-10 items-center justify-center border-b-2 border-[#76b9ed]">
        <ControlPanelIcon size={22} />
        <span className="absolute right-0 -bottom-[2px] h-[2px] w-2 bg-[#4f7ea6]" />
      </button>
      <button aria-label="Optimize Drives" className="ml-[3px] flex w-12 items-center justify-center border-b-2 border-[#76b9ed] bg-[#33363a]">
        <DefragIcon size={24} />
      </button>

      <div className="relative ml-auto flex w-[255px] items-center justify-end overflow-hidden">
        {/* watermark behind the tray */}
        <div className="absolute inset-0 flex items-start gap-[13px] pl-[5px] text-[#7d7d7d]">
          <svg width="50" height="40" viewBox="0 0 50 40" fill="none" className="shrink-0" aria-hidden="true">
            <path d="M13 0h33c3 2 3.500 5 3 8L33 34c-2 3-4 4-7 4L5 33C1 32-1 27 1 23z" fill="#8f8f8f" />
            <path d="M5 23l22 6c2 .500 3 0 4-1.500L47 4c1.500 2 1 4 0 5.500L32 32c-1.500 2.500-3 3-5.500 2.500L6 29.500C3 28.500 2.500 24 5 23z" fill="#010307" />
            <path d="M6 24.500l20 5.300M5.500 27.500L27 33c1.500.300 2.500 0 3.500-1.500" stroke="#8f8f8f" strokeWidth="2" />
            <path d="M22 2l16 3.500" stroke="#010307" strokeWidth="3" />
          </svg>
          <span className="pt-[1px] text-[17px] leading-7 whitespace-nowrap">The Collection Book</span>
        </div>
        <button aria-label="Show hidden icons" className="relative mr-2">
          <Svg><path d="M2 11l6-6 6 6" stroke="#fff" strokeWidth="1.300" /></Svg>
        </button>
        <button aria-label="Network" className="relative mr-2">
          <Svg>
            <path d="M5 3.500h10.500v7.500H4.500V7M9.500 11v3M6 14.500h7M.500 1.500h4v4h-4zM2.500 5.500V9" stroke="#fff" strokeWidth="1.200" />
          </Svg>
        </button>
        <button aria-label="Volume" className="relative">
          <Svg>
            <path d="M.600 6h2.500L6.500 3v10L3 10H.600zM9 6c1 1.200 1 2.800 0 4M11.200 4.500c1.700 2 1.700 5 0 7M13.300 3c2.300 3 2.300 7 0 10" stroke="#fff" strokeWidth="1.100" />
          </Svg>
        </button>
        <div className="relative w-[74px] text-center leading-[18px] whitespace-nowrap">
          <div>9:14 AM</div>
          <div>5/19/2016</div>
        </div>
        <button aria-label="Notifications" className="relative ml-[11px]">
          <Svg><path d="M.500 1.500h15v10h-5L8 14.500 5.500 11.500h-5z" stroke="#fff" strokeWidth="1.300" /></Svg>
        </button>
        <div className="relative mr-1 ml-4 h-full w-px bg-[#555]" />
      </div>
    </footer>
  )
}

export default function App() {
  return (
    <div className="relative flex min-h-screen flex-col overflow-hidden bg-white font-['Segoe_UI','Open_Sans','Noto_Sans',sans-serif] text-[12px] leading-4 text-black">
      <ControlPanel />
      <Explorer />
      <OptimizeDialog />
      <Taskbar />
    </div>
  )
}
